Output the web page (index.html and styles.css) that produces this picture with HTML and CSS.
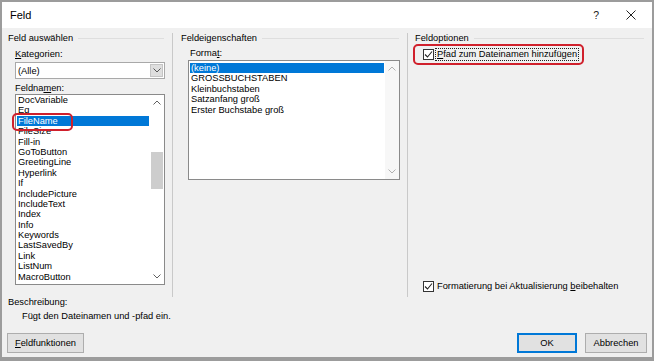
FILE: index.html
```html
<!DOCTYPE html>
<html lang="de">
<head>
<meta charset="utf-8">
<title>Feld</title>
<link rel="stylesheet" href="styles.css">
</head>
<body>
<div class="window">
  <div class="titlebar">
    <span class="title">Feld</span>
    <span class="help">?</span>
    <svg class="close" width="10" height="10" viewBox="0 0 10 10"><path d="M0.5 0.5L9.5 9.5M9.5 0.5L0.5 9.5" stroke="#222" stroke-width="1"/></svg>
  </div>
  <div class="main">
    <section class="col col1">
      <div class="heading"><span>Feld auswählen</span></div>
      <div class="inner">
        <div class="label lbl-kat"><u>K</u>ategorien:</div>
        <div class="combo">
          <span class="combo-text">(Alle)</span>
          <span class="combo-btn"><svg width="8" height="5" viewBox="0 0 8 5"><path d="M0.5 0.5L4 4L7.5 0.5" fill="none" stroke="#555" stroke-width="1"/></svg></span>
        </div>
        <div class="label lbl-feld">Feldna<u>m</u>en:</div>
        <div class="listbox list-names">
          <ul class="items">
            <li>DocVariable</li>
            <li>Eq</li>
            <li class="sel">FileName</li>
            <li>FileSize</li>
            <li>Fill-in</li>
            <li>GoToButton</li>
            <li>GreetingLine</li>
            <li>Hyperlink</li>
            <li>If</li>
            <li>IncludePicture</li>
            <li>IncludeText</li>
            <li>Index</li>
            <li>Info</li>
            <li>Keywords</li>
            <li>LastSavedBy</li>
            <li>Link</li>
            <li>ListNum</li>
            <li>MacroButton</li>
          </ul>
          <div class="scrollbar">
            <svg class="arrow" width="8" height="5" viewBox="0 0 8 5"><path d="M0.5 4.5L4 1L7.5 4.5" fill="none" stroke="#606060" stroke-width="1"/></svg>
            <div class="track"><div class="thumb"></div></div>
            <svg class="arrow" width="8" height="5" viewBox="0 0 8 5"><path d="M0.5 0.5L4 4L7.5 0.5" fill="none" stroke="#606060" stroke-width="1"/></svg>
          </div>
        </div>
      </div>
    </section>
    <section class="col col2">
      <div class="heading"><span>Feldeigenschaften</span></div>
      <div class="inner">
        <div class="label lbl-format">Forma<u>t</u>:</div>
        <div class="listbox list-format">
          <ul class="items">
            <li class="sel">(keine)</li>
            <li>GROSSBUCHSTABEN</li>
            <li>Kleinbuchstaben</li>
            <li>Satzanfang groß</li>
            <li>Erster Buchstabe groß</li>
          </ul>
          <div class="scrollbar">
            <svg class="arrow" width="8" height="5" viewBox="0 0 8 5"><path d="M0.5 4.5L4 1L7.5 4.5" fill="none" stroke="#b0b0b0" stroke-width="1"/></svg>
            <div class="track"></div>
            <svg class="arrow" width="8" height="5" viewBox="0 0 8 5"><path d="M0.5 0.5L4 4L7.5 0.5" fill="none" stroke="#b0b0b0" stroke-width="1"/></svg>
          </div>
        </div>
      </div>
    </section>
    <section class="col col3">
      <div class="heading"><span>Feldoptionen</span></div>
      <div class="inner inner3">
        <label class="check check-top">
          <span class="box"><svg width="9" height="9" viewBox="0 0 9 9"><path d="M1 4.5L3.5 7L8 1.5" fill="none" stroke="#222" stroke-width="1.1"/></svg></span>
          <span class="check-label focus"><u>P</u>fad zum Dateinamen hinzufügen</span>
        </label>
        <label class="check check-bottom">
          <span class="box"><svg width="9" height="9" viewBox="0 0 9 9"><path d="M1 4.5L3.5 7L8 1.5" fill="none" stroke="#222" stroke-width="1.1"/></svg></span>
          <span class="check-label">Formatierung bei Aktualisierung <u>b</u>eibehalten</span>
        </label>
      </div>
    </section>
  </div>
  <div class="desc">
    <div class="desc-title">Beschreibung:</div>
    <div class="desc-text">Fügt den Dateinamen und -pfad ein.</div>
  </div>
  <div class="buttons">
    <button class="btn btn-codes" type="button"><u>F</u>eldfunktionen</button>
    <span class="spacer"></span>
    <button class="btn btn-ok" type="button">OK</button>
    <button class="btn btn-cancel" type="button">Abbrechen</button>
  </div>
  <div class="mark mark-left"></div>
  <div class="mark mark-right"></div>
</div>
</body>
</html>
```
FILE: styles.css
```css
* { box-sizing: border-box; }
html, body { margin: 0; padding: 0; }
body {
  background: #9c9c9c;
  width: 654px;
  height: 361px;
  overflow: hidden;
  font-family: "Liberation Sans", Arial, sans-serif;
  font-size: 9.3px;
  color: #000;
}
.window {
  position: relative;
  margin: 2px 0 0 2px;
  width: 650px;
  height: 355px;
  background: #f0f0f0;
  display: flex;
  flex-direction: column;
}
.titlebar {
  height: 26px;
  background: #fff;
  display: flex;
  align-items: center;
  padding-left: 8px;
  flex: none;
}
.title { font-size: 11px; flex: 1; }
.help { font-size: 10.5px; margin-right: 27px; color: #222; }
.close { margin-right: 16px; }

.main {
  display: flex;
  height: 269px;
  padding-top: 5px;
  flex: none;
}
.col { height: 100%; }
.col1 { width: 170px; padding-left: 6px; }
.col2 { width: 235px; border-left: 1px solid #c9c9c9; padding-left: 8px; }
.col3 { flex: 1; border-left: 1px solid #c9c9c9; padding-left: 7px; display: flex; flex-direction: column; }

.heading {
  display: flex;
  align-items: center;
  height: 11px;
  line-height: 11px;
}
.heading::after {
  content: "";
  flex: 1;
  height: 1px;
  background: #dedede;
  margin-left: 5px;
  margin-right: 8px;
}
.inner { padding-left: 7px; }
.col2 .inner { padding-left: 8px; }

.label { height: 11px; line-height: 11px; }
.lbl-kat { margin-top: 5px; }
.lbl-feld { margin-top: 4px; }
.lbl-format { margin-top: 4px; margin-left: 1px; }

.combo {
  margin-top: 2px;
  width: 150px;
  height: 17px;
  border: 1px solid #a9a9a9;
  background: #fff;
  display: flex;
  align-items: center;
  padding-left: 2px;
}
.combo-text { flex: 1; }
.combo-btn {
  width: 13px;
  height: 13px;
  margin-right: 1px;
  background: #dedede;
  border: 1px solid #c4c4c4;
  display: flex;
  align-items: center;
  justify-content: center;
}

.listbox {
  border: 1px solid #8a8a8a;
  background: #fff;
  display: flex;
  overflow: hidden;
}
.list-names { width: 150px; height: 191px; }
.list-format { width: 212px; height: 120px; margin-top: 1px; margin-left: -1px; }
.items {
  list-style: none;
  margin: 0;
  padding: 0 1px;
  flex: 1;
}
.items li {
  height: 10.4px;
  line-height: 10.4px;
  padding-left: 1px;
  white-space: nowrap;
}
.list-format .items { padding-top: 2px; }
.items li.sel { background: #0078d7; color: #fff; }

.scrollbar {
  width: 14px;
  display: flex;
  flex-direction: column;
  align-items: center;
  background: #fff;
}
.list-format .scrollbar { background: #f7f7f7; }
.scrollbar .arrow { flex: none; margin: 5px 0; }
.track { flex: 1; width: 100%; padding: 0 1px; }
.thumb {
  margin-top: 42px;
  height: 37px;
  background: #cdcdcd;
}

.inner3 { padding-left: 8px; flex: 1; display: flex; flex-direction: column; }
.check { display: flex; align-items: center; height: 13px; }
.check-top { margin-top: 4px; }
.check-bottom { margin-top: auto; margin-bottom: 4px; }
.box {
  width: 11px;
  height: 11px;
  border: 1px solid #333;
  background: #fff;
  display: flex;
  align-items: center;
  justify-content: center;
  flex: none;
}
.check-label { margin-left: 3px; line-height: 11px; }
.focus { outline: 1px dotted #222; outline-offset: 0; padding: 0 1px; margin-left: 2px; }

.desc { height: 36px; padding-left: 6px; flex: none; }
.desc-title { height: 14px; line-height: 11px; }
.desc-text { padding-left: 14px; line-height: 11px; }

.buttons {
  display: flex;
  padding: 0 5px 0 5px;
  height: 20px;
  flex: none;
}
.spacer { flex: 1; }
.btn {
  font-family: inherit;
  font-size: 9.3px;
  color: #000;
  background: #e1e1e1;
  border: 1px solid #adadad;
  height: 20px;
  padding: 0;
  margin: 0;
}
.btn-codes { width: 77px; }
.btn-ok { width: 60px; border: 2px solid #0078d7; margin-right: 8px; }
.btn-cancel { width: 62px; }

.mark {
  position: absolute;
  border: 2px solid #d0202c;
  border-radius: 5px;
}
.mark-left { left: 10px; top: 111px; width: 61px; height: 18px; }
.mark-right { left: 411px; top: 42px; width: 171px; height: 21px; }
```
